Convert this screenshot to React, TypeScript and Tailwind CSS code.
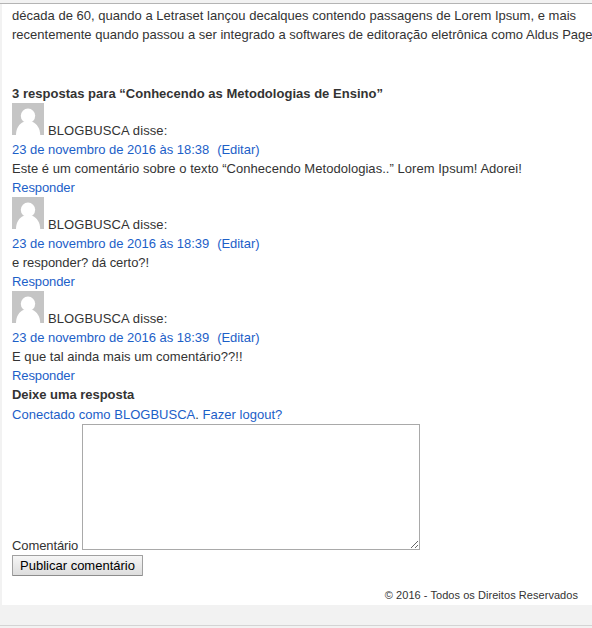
const comments = [
  { time: "23 de novembro de 2016 às 18:38", text: "Este é um comentário sobre o texto “Conhecendo Metodologias..” Lorem Ipsum! Adorei!", spacing: "tracking-[0.04px]" },
  { time: "23 de novembro de 2016 às 18:39", text: "e responder? dá certo?!", spacing: "tracking-[-0.04px]" },
  { time: "23 de novembro de 2016 às 18:39", text: "E que tal ainda mais um comentário??!!", spacing: "tracking-[0.04px]" },
];

function Avatar() {
  return (
    <svg className="h-8 w-8 shrink-0" viewBox="0 0 32 32">
      <rect width="32" height="32" fill="#c5c5c5" />
      <circle cx="16" cy="12.8" r="7.2" fill="#fff" />
      <path d="M4 32C4 25.5 7 20.5 12 18.7H20C25 20.5 28.2 25.5 28.2 32Z" fill="#fff" />
    </svg>
  );
}

export default function App() {
  return (
    <div className="flex h-[628px] w-[592px] flex-col overflow-hidden bg-[#f2f2f2] pt-[3px] font-['Liberation_Sans',Arial,sans-serif] text-[13px] leading-[19px] text-[#333]">
      <div className="h-px shrink-0 bg-[#b4b4b4]" />
      <main className="ml-[2px] h-[601px] shrink-0 bg-white pl-[10px] pt-[2px]">
        <p className="whitespace-nowrap tracking-[0.02px]">década de 60, quando a Letraset lançou decalques contendo passagens de Lorem Ipsum, e mais</p>
        <p className="whitespace-nowrap tracking-[0.01px]">recentemente quando passou a ser integrado a softwares de editoração eletrônica como Aldus Page</p>
        <h3 className="mt-10 font-bold tracking-[0.02px]">3 respostas para “Conhecendo as Metodologias de Ensino”</h3>
        {comments.map((c, i) => (
          <div key={i} className="h-[94px]">
            <div className="flex h-[37px] items-start gap-1">
              <Avatar />
              <span className="mt-[18px] tracking-[0.1px]">BLOGBUSCA disse:</span>
            </div>
            <div className="flex gap-2 tracking-[-0.03px] text-[#1c60c8]"><a>{c.time}</a><a>(Editar)</a></div>
            <p className={c.spacing}>{c.text}</p>
            <a className="block tracking-[-0.1px] text-[#1c60c8]">Responder</a>
          </div>
        ))}
        <h3 className="font-bold tracking-[-0.04px]">Deixe uma resposta</h3>
        <p className="mt-px tracking-[0.02px] text-[#1c60c8]">Conectado como BLOGBUSCA<span className="text-[#333]">.</span> Fazer logout?</p>
        <div className="flex h-[131px] items-end">
          <span className="w-[70px] tracking-[-0.1px]">Comentário</span>
          <textarea className="mb-[5px] h-[126px] w-[338px] resize self-start border border-[#a9a9a9] bg-white" />
        </div>
        <button className="block h-[21px] w-[131px] rounded-[1px] border border-[#a0a0a0] border-b-[#8c8c8c] bg-linear-to-b from-[#f6f6f6] to-[#dddddd] text-center leading-[19px] text-black">Publicar comentário</button>
        <p className="mt-[10px] pr-[14px] text-right text-[11px] tracking-[0.05px]">© 2016 - Todos os Direitos Reservados</p>
      </main>
      <div className="mt-5 h-px shrink-0 bg-[#d4d4d4]" />
    </div>
  );
}
